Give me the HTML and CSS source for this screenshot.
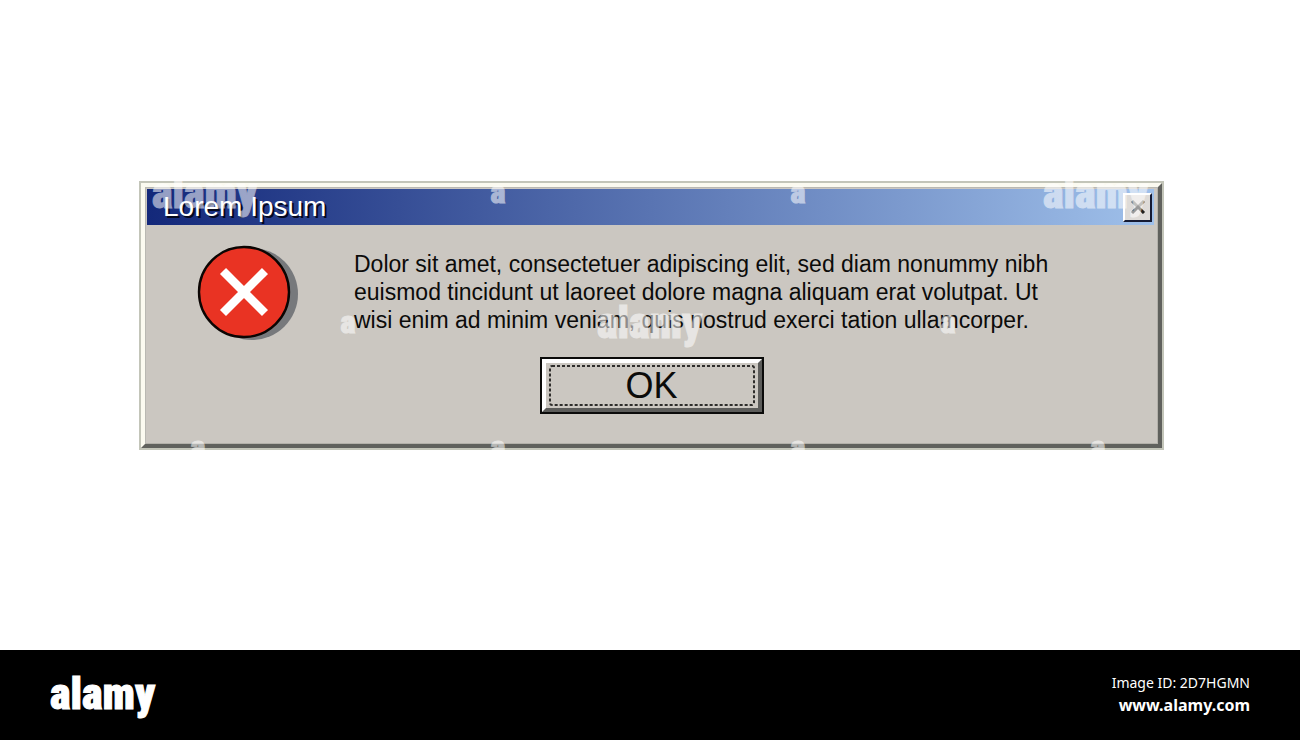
FILE: index.html
```html
<!DOCTYPE html>
<html lang="en">
<head>
<meta charset="utf-8">
<meta name="viewport" content="width=device-width, initial-scale=1">
<title>Lorem Ipsum</title>
<link rel="stylesheet" href="styles.css">
</head>
<body>
<main class="stage">
  <section class="dialog" role="alertdialog" aria-labelledby="dialog-title" aria-describedby="dialog-message">
    <div class="bevel">
      <header class="titlebar">
        <h1 class="title" id="dialog-title">Lorem Ipsum</h1>
        <button class="close" type="button" aria-label="Close">
          <svg class="close-icon" viewBox="0 0 16 14" aria-hidden="true">
            <path d="M2 1 8 7 14 1" stroke="#77746f"/>
            <path d="M2 13 8 7 14 13" stroke="#20201f"/>
          </svg>
        </button>
      </header>
      <div class="content">
        <svg class="error-icon" viewBox="0 0 102 96" aria-hidden="true">
          <circle cx="55" cy="49" r="46" fill="#77797c"/>
          <circle cx="47" cy="47" r="45" fill="#e93323" stroke="#0b0503" stroke-width="2.4"/>
          <path d="M26 26 68 68M68 26 26 68" stroke="#fff" stroke-width="8.5"/>
        </svg>
        <p class="message" id="dialog-message">Dolor sit amet, consectetuer adipiscing elit, sed diam nonummy nibh euismod tincidunt ut laoreet dolore magna aliquam erat volutpat. Ut wisi enim ad minim veniam, quis nostrud exerci tation ullamcorper.</p>
      </div>
      <div class="actions">
        <button class="ok" type="button">
          <span class="ok-face">
            <svg class="focus-ring" aria-hidden="true"><rect class="focus-line" x="1" y="1" rx="2"/></svg>
            OK
          </span>
        </button>
      </div>
    </div>
  </section>
  <div class="watermarks" aria-hidden="true">
    <span class="mark word top-left">alamy</span>
    <span class="mark word top-right">alamy</span>
    <span class="mark word center">alamy</span>
    <span class="mark letter row-1 col-3">a</span>
    <span class="mark letter row-1 col-5">a</span>
    <span class="mark letter row-2 col-2">a</span>
    <span class="mark letter row-2 col-6">a</span>
    <span class="mark letter row-3 col-1">a</span>
    <span class="mark letter row-3 col-3">a</span>
    <span class="mark letter row-3 col-5">a</span>
    <span class="mark letter row-3 col-7">a</span>
  </div>
</main>
<footer class="footer">
  <span class="logo">alamy</span>
  <div class="credits">
    <span class="image-id">Image ID: 2D7HGMN</span>
    <a class="site" href="#">www.alamy.com</a>
  </div>
</footer>
</body>
</html>
```
FILE: styles.css
```css
* {
  box-sizing: border-box;
}

body {
  margin: 0;
  min-height: 100vh;
  display: flex;
  flex-direction: column;
  background: #fff;
  color: #0b0b0a;
  font-family: "Liberation Sans", Arial, sans-serif;
}

.stage {
  position: relative;
  flex: 1;
  padding: 181px 136px 40px 139px;
}

.dialog {
  border: 2px solid #c3c5b9;
}

.bevel {
  border: 4px solid;
  border-color: #fbfaf0 #60615d #60615d #fbfaf0;
  padding: 2px 4px 30px 2px;
  background: #cbc7c1;
  box-shadow: inset 1px 1px #b9b8b2, inset -1px -1px #b3b1aa;
}

.titlebar {
  display: flex;
  align-items: center;
  justify-content: space-between;
  height: 36px;
  padding: 0 2px 0 16px;
  background: linear-gradient(90deg, #13287a, #9fc0ea);
}

.title {
  margin: 0;
  color: #fff;
  font-size: 28px;
  font-weight: 400;
  line-height: 36px;
  text-shadow: 2px 2px #05081c;
}

.close {
  display: flex;
  align-items: center;
  justify-content: center;
  width: 29px;
  height: 29px;
  padding: 0;
  border: 2px solid;
  border-color: #fff #151a33 #151a33 #fff;
  background: #dedbd8;
}

.close-icon {
  width: 16px;
  height: 14px;
  fill: none;
  stroke-width: 3;
}

.content {
  display: flex;
  gap: 55px;
  padding: 20px 88px 0 50px;
}

.error-icon {
  flex: none;
  width: 102px;
  height: 96px;
}

.message {
  margin: 5px 0 0;
  font-size: 23px;
  line-height: 28px;
}

.actions {
  display: flex;
  justify-content: center;
  padding: 16px 0 0 2px;
}

.ok {
  width: 224px;
  height: 57px;
  padding: 0;
  border: 2px solid #0b0b0a;
  background: #cbc7c1;
  color: inherit;
  font: inherit;
}

.ok-face {
  position: relative;
  display: flex;
  align-items: center;
  justify-content: center;
  height: 100%;
  border: 4px solid;
  border-color: #fff #5c5c5a #5c5c5a #fff;
  font-size: 36px;
  line-height: 36px;
}

.focus-ring {
  position: absolute;
  inset: 2px 3px;
  width: calc(100% - 6px);
  height: calc(100% - 4px);
}

.focus-line {
  width: calc(100% - 2px);
  height: calc(100% - 2px);
  fill: none;
  stroke: #2e2d2b;
  stroke-width: 2;
  stroke-dasharray: 3 2;
}

.watermarks {
  position: absolute;
  inset: 0;
  overflow: hidden;
  pointer-events: none;
}

.mark,
.logo {
  font-family: "Roboto Condensed", "Roboto", sans-serif;
  font-weight: 900;
  -webkit-text-stroke: 1px #fff;
}

.mark {
  position: absolute;
  color: #fff;
  opacity: 0.55;
}

.word,
.logo {
  font-size: 44px;
  line-height: 52px;
}

.letter {
  width: 16px;
  font-size: 32px;
  line-height: 32px;
  text-align: center;
}

.top-left { left: 152px; top: 167px; }
.top-right { left: 1043px; top: 167px; }
.center { left: 597px; top: 297px; }
.row-1 { top: 176px; }
.row-2 { top: 306px; }
.row-3 { top: 431px; }
.col-1 { left: 190px; }
.col-2 { left: 340px; }
.col-3 { left: 490px; }
.col-5 { left: 790px; }
.col-6 { left: 940px; }
.col-7 { left: 1090px; }

.footer {
  display: flex;
  align-items: center;
  justify-content: space-between;
  height: 90px;
  padding: 0 50px;
  background: #000;
  color: #fff;
}

.logo {
  padding-bottom: 3px;
}

.credits {
  display: flex;
  flex-direction: column;
  align-items: flex-end;
  padding-bottom: 3px;
  font-family: "Noto Sans", sans-serif;
  line-height: 23px;
}

.image-id {
  font-size: 14px;
}

.site {
  color: inherit;
  font-size: 16px;
  font-weight: 700;
  text-decoration: none;
}
```
